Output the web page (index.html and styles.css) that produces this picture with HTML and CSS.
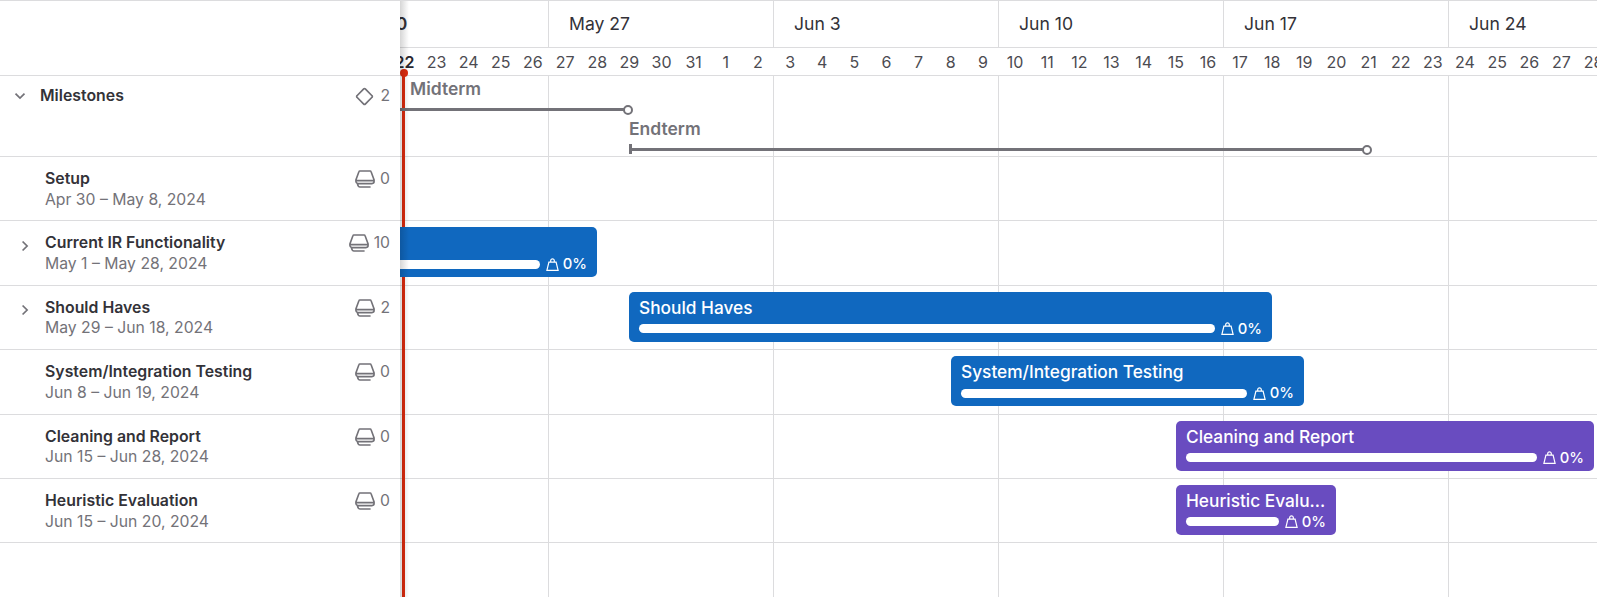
FILE: index.html
```
<!DOCTYPE html>
<html lang="en">
<head>
<meta charset="utf-8">
<title>Roadmap</title>
<link rel="stylesheet" href="styles.css">
</head>
<body>
<svg width="0" height="0" class="defs">
  <symbol id="epic" viewBox="0 0 20 18"><path d="M4.800 1h10.400q.6 0 .8.600L19.100 10v1.200a2.200 2.200 0 0 1-2 2.300H3a2.200 2.200 0 0 1-2.100-2.300V10L4 1.600q.2-.6.8-.6zM1 10.600h18M2.400 13.600q.6 3.300 2.600 3.400h10.600M2.400 13.800h15"/></symbol>
  <symbol id="weight" viewBox="0 0 13 13"><path d="M2.900 4.200h7.200l2 8.100H.9zM4.700 4.200V2.600a1.800 1.800 0 1 1 3.600 0v1.600"/></symbol>
</svg>
<div class="roadmap">
  <aside class="side">
    <div class="side-head"></div>
    <div class="item milestones"><svg class="chev down" viewBox="0 0 12 12"><path d="M1.500 3.600 6 8.100l4.500-4.500"/></svg><div class="info"><b>Milestones</b></div><div class="count"><svg class="diamond" viewBox="0 0 20 20"><path d="M9.200 2 2.100 9.200a1.100 1.100 0 0 0 0 1.600L9.200 18a1.100 1.100 0 0 0 1.600 0l7.100-7.200a1.100 1.100 0 0 0 0-1.600L10.800 2a1.100 1.100 0 0 0-1.600 0z"/></svg><span>2</span></div></div>
    <div class="item"><div class="info"><b>Setup</b><span>Apr 30 – May 8, 2024</span></div><div class="count"><svg class="epic"><use href="#epic"/></svg><span>0</span></div></div>
    <div class="item"><svg class="chev" viewBox="0 0 12 12"><path d="M3.600 1.500 8.100 6l-4.500 4.500"/></svg><div class="info"><b>Current IR Functionality</b><span>May 1 – May 28, 2024</span></div><div class="count"><svg class="epic"><use href="#epic"/></svg><span>10</span></div></div>
    <div class="item"><svg class="chev" viewBox="0 0 12 12"><path d="M3.600 1.500 8.100 6l-4.500 4.500"/></svg><div class="info"><b>Should Haves</b><span>May 29 – Jun 18, 2024</span></div><div class="count"><svg class="epic"><use href="#epic"/></svg><span>2</span></div></div>
    <div class="item"><div class="info"><b>System/Integration Testing</b><span>Jun 8 – Jun 19, 2024</span></div><div class="count"><svg class="epic"><use href="#epic"/></svg><span>0</span></div></div>
    <div class="item"><div class="info"><b>Cleaning and Report</b><span>Jun 15 – Jun 28, 2024</span></div><div class="count"><svg class="epic"><use href="#epic"/></svg><span>0</span></div></div>
    <div class="item"><div class="info"><b>Heuristic Evaluation</b><span>Jun 15 – Jun 20, 2024</span></div><div class="count"><svg class="epic"><use href="#epic"/></svg><span>0</span></div></div>
  </aside>
  <main class="timeline">
    <div class="weeks"><div class="week current">May 20</div><div class="week">May 27</div><div class="week">Jun 3</div><div class="week">Jun 10</div><div class="week">Jun 17</div><div class="week">Jun 24</div></div>
    <div class="days"><b>22</b><i>23</i><i>24</i><i>25</i><i>26</i><i>27</i><i>28</i><i>29</i><i>30</i><i>31</i><i>1</i><i>2</i><i>3</i><i>4</i><i>5</i><i>6</i><i>7</i><i>8</i><i>9</i><i>10</i><i>11</i><i>12</i><i>13</i><i>14</i><i>15</i><i>16</i><i>17</i><i>18</i><i>19</i><i>20</i><i>21</i><i>22</i><i>23</i><i>24</i><i>25</i><i>26</i><i>27</i><i>28</i></div>
    <div class="body">
      <div class="row milestones">
        <div class="mile midterm"><span>Midterm</span><div class="track"></div></div>
        <div class="mile endterm"><span>Endterm</span><div class="track"></div></div>
      </div>
      <div class="row"></div>
      <div class="row"><div class="bar current-ir"><span class="name"></span><div class="meter"><div class="progress"></div><svg><use href="#weight"/></svg><span>0%</span></div></div></div>
      <div class="row"><div class="bar should"><span class="name">Should Haves</span><div class="meter"><div class="progress"></div><svg><use href="#weight"/></svg><span>0%</span></div></div></div>
      <div class="row"><div class="bar testing"><span class="name">System/Integration Testing</span><div class="meter"><div class="progress"></div><svg><use href="#weight"/></svg><span>0%</span></div></div></div>
      <div class="row"><div class="bar purple cleaning"><span class="name">Cleaning and Report</span><div class="meter"><div class="progress"></div><svg><use href="#weight"/></svg><span>0%</span></div></div></div>
      <div class="row"><div class="bar purple heuristic"><span class="name">Heuristic Evaluation</span><div class="meter"><div class="progress"></div><svg><use href="#weight"/></svg><span>0%</span></div></div></div>
    </div>
    <div class="today"></div>
    <div class="edge-shadow"></div>
  </main>
</div>
</body>
</html>
```
FILE: styles.css
```
*, *::before, *::after { box-sizing: border-box; }
body { margin: 0; background: #fff; color: #333238; font-family: Inter, "Liberation Sans", sans-serif; font-size: 16px; overflow: hidden; }
.defs { position: absolute; }
svg { fill: none; stroke: #737278; flex: none; overflow: visible; }
.roadmap { display: flex; width: 1597px; height: 597px; border-top: 1px solid #dcdcde; }

.side { width: 400px; flex: none; }
.side-head { height: 75px; border-bottom: 1px solid #dcdcde; }
.item { height: 64.4px; border-bottom: 1px solid #dcdcde; display: flex; align-items: flex-start; position: relative; padding: 12.100px 10px 0 45px; }
.item.milestones { height: 81px; padding: 10px 10px 0 40px; }
.info { flex: 1; display: flex; flex-direction: column; line-height: 20.500px; }
.info b { font-weight: 600; font-size: 15.850px; }
.info span { color: #737278; font-size: 15.750px; }
.chev { position: absolute; width: 12px; height: 12px; left: 19px; top: 18.500px; stroke-width: 1.700; }
.chev.down { left: 14px; top: 14px; }
.count { display: flex; align-items: center; color: #737278; line-height: 20px; gap: 5px; font-size: 15.750px; }
.epic { width: 20px; height: 18px; stroke-width: 1.600; }
.diamond { width: 19px; height: 19px; stroke-width: 1.800; }
.item.milestones .count { gap: 6px; }

.timeline { flex: 1; min-width: 0; display: flex; flex-direction: column; position: relative; overflow: hidden; }
.weeks { display: flex; height: 47px; flex: none; border-bottom: 1px solid #dcdcde; margin-left: -76px; }
.week { width: 225px; flex: none; border-right: 1px solid #dcdcde; padding-left: 20px; font-size: 17.600px; line-height: 46px; }
.week.current { font-weight: 600; padding-left: 20px; }
.days { display: flex; height: 28px; flex: none; border-bottom: 1px solid #dcdcde; margin-left: -11.700px; line-height: 29px; color: #4c4b51; }
.days > * { width: 32.143px; flex: none; text-align: center; font-style: normal; }
.days b { font-weight: 600; color: #28272d; }
.body { flex: 1; background: repeating-linear-gradient(to right, #dcdcde 0 1px, transparent 1px 225px) 148px 0 no-repeat; }
.row { height: 64.4px; border-bottom: 1px solid #dcdcde; padding-top: 6px; }
.row.milestones { height: 81px; padding-top: 0; }
.mile { height: 40px; color: #737278; font-weight: 600; font-size: 17.500px; line-height: 26px; position: relative; z-index: 2; }
.midterm { margin-left: -40px; width: 270px; padding-left: 50px; }
.endterm { margin-left: 229px; width: 740px; }
.track { height: 3px; background: #737278; margin-top: 6px; position: relative; }
.midterm .track { margin-left: -50px; }
.track::after { content: ""; position: absolute; right: -3px; top: -3px; width: 10px; height: 10px; border: 2px solid #737278; border-radius: 50%; background: #fff; }
.endterm .track::before { content: ""; position: absolute; left: 0; top: -4px; width: 3px; height: 10px; background: #737278; }
.bar { height: 50px; border-radius: 5px; background: #1068bf; color: #fff; padding: 3px 10px 0; position: relative; z-index: 2; }
.bar.purple { background: #694cc0; }
.name { display: block; height: 25px; font-size: 17.300px; line-height: 25px; font-weight: 500; overflow: hidden; white-space: nowrap; text-overflow: ellipsis; }
.meter { display: flex; align-items: center; height: 18px; font-size: 14.800px; font-weight: 500; }
.progress { flex: 1; height: 9px; border-radius: 5px; background: #fff; }
.meter svg { width: 13px; height: 13px; stroke: #fff; stroke-width: 1.200; margin: 0 3.500px 0 6px; }
.current-ir { margin-left: -300px; width: 497px; }
.should { margin-left: 229px; width: 643px; }
.testing { margin-left: 551px; width: 353px; }
.cleaning { margin-left: 776px; width: 418px; }
.heuristic { margin-left: 776px; width: 160px; }
.today { position: absolute; left: 2px; top: 72px; bottom: 0; width: 3px; background: #dd2b0e; z-index: 1; }
.today::before { content: ""; position: absolute; left: -2px; top: -4px; width: 8px; height: 8px; border-radius: 50%; background: #dd2b0e; }
.edge-shadow { position: absolute; left: 0; top: 0; bottom: 0; width: 9px; background: linear-gradient(to right, rgba(0,0,0,.16), transparent); z-index: 3; }
```
